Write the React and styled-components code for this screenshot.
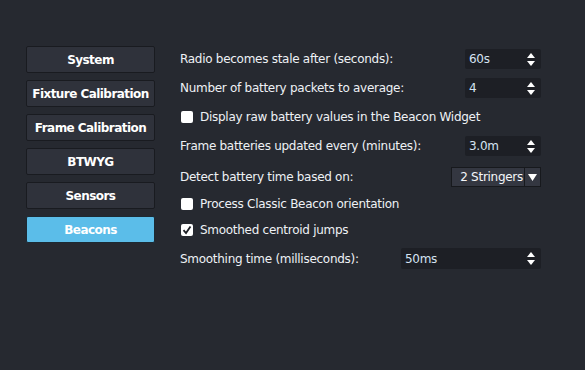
import styled, { createGlobalStyle } from 'styled-components';

const GlobalStyle = createGlobalStyle`
  html, body {
    margin: 0;
    padding: 0;
    background: #262930;
  }
  * {
    box-sizing: border-box;
  }
`;

const Page = styled.div`
  width: 585px;
  height: 370px;
  background: #262930;
  display: flex;
  flex-direction: row;
  padding-top: 46px;
  padding-left: 26px;
  font-family: 'DejaVu Sans', Verdana, sans-serif;
  color: #f2f4f8;
  letter-spacing: -0.28px;
`;

const Sidebar = styled.div`
  display: flex;
  flex-direction: column;
  gap: 7px;
  width: 129px;
`;

const NavButton = styled.div`
  height: 27px;
  border-radius: 2px;
  border: 1px solid ${(props) => (props.active ? '#1d2a33' : '#191b20')};
  background: ${(props) => (props.active ? '#5bbde9' : '#2f323b')};
  display: flex;
  justify-content: center;
  align-items: center;
  font-size: 12px;
  font-weight: bold;
  color: #ffffff;
  white-space: nowrap;
  letter-spacing: -0.55px;
`;

const Settings = styled.div`
  margin-left: 25px;
  margin-top: 3px;
  width: 361px;
  display: flex;
  flex-direction: column;
  gap: 9px;
`;

const Row = styled.div`
  display: flex;
  flex-direction: row;
  justify-content: space-between;
  align-items: center;
  height: ${(props) => props.h || 20}px;
  margin-top: ${(props) => props.mt || 0}px;
  font-size: 12px;
  white-space: nowrap;
`;

const Label = styled.span`
  color: #eef1f5;
`;

const SpinBox = styled.div`
  width: ${(props) => props.w}px;
  height: ${(props) => props.h || 20}px;
  background: #1d1f25;
  border-radius: 2px;
  display: flex;
  align-items: center;
  justify-content: space-between;
  padding-left: 4px;
  padding-right: 6px;
  color: #d6e3f2;
  font-size: 12px;
`;

const Combo = styled.div`
  width: 90px;
  height: 20px;
  display: flex;
  background: #343741;
  border: 1px solid #17191d;
  font-size: 12px;
  color: #f4f6f9;
`;

const ComboText = styled.div`
  flex: 1;
  display: flex;
  align-items: center;
  justify-content: flex-end;
  padding-right: 1px;
`;

const ComboArrow = styled.div`
  width: 16px;
  border-left: 1px solid #17191d;
  display: flex;
  align-items: center;
  justify-content: center;
`;

const CheckRow = styled.label`
  display: flex;
  align-items: center;
  gap: 7px;
  height: 18px;
  margin-top: ${(props) => props.mt || 0}px;
  font-size: 12px;
  color: #eef1f5;
  padding-left: 1px;
  white-space: nowrap;
`;

const Box = styled.span`
  width: 12px;
  height: 12px;
  border-radius: 2px;
  background: #ffffff;
  display: flex;
  align-items: center;
  justify-content: center;
`;

function Arrows() {
  return (
    <svg width="8" height="13" viewBox="0 0 8 13">
      <polygon points="4,0 8,5 0,5" fill="#ffffff" />
      <polygon points="0,8 8,8 4,13" fill="#ffffff" />
    </svg>
  );
}

function Spin({ value, w, h }) {
  return (
    <SpinBox w={w} h={h}>
      <span>{value}</span>
      <Arrows />
    </SpinBox>
  );
}

function Check({ checked, mt, children }) {
  return (
    <CheckRow mt={mt}>
      <Box>
        {checked && (
          <svg width="10" height="10" viewBox="0 0 10 10">
            <polyline
              points="1.5,5.2 4,8 8.5,1.5"
              fill="none"
              stroke="#1d1f25"
              strokeWidth="1.8"
            />
          </svg>
        )}
      </Box>
      {children}
    </CheckRow>
  );
}

const navItems = [
  'System',
  'Fixture Calibration',
  'Frame Calibration',
  'BTWYG',
  'Sensors',
  'Beacons',
];

export default function App() {
  return (
    <>
      <GlobalStyle />
      <Page>
        <Sidebar>
          {navItems.map((item) => (
            <NavButton key={item} active={item === 'Beacons'}>
              {item}
            </NavButton>
          ))}
        </Sidebar>
        <Settings>
          <Row>
            <Label>Radio becomes stale after (seconds):</Label>
            <Spin value="60s" w={76} />
          </Row>
          <Row>
            <Label>Number of battery packets to average:</Label>
            <Spin value="4" w={76} />
          </Row>
          <Check mt={1}>Display raw battery values in the Beacon Widget</Check>
          <Row mt={1}>
            <Label>Frame batteries updated every (minutes):</Label>
            <Spin value="3.0m" w={76} />
          </Row>
          <Row mt={2}>
            <Label>Detect battery time based on:</Label>
            <Combo>
              <ComboText>2 Stringers</ComboText>
              <ComboArrow>
                <svg width="9" height="7" viewBox="0 0 9 7">
                  <polygon points="0,0 9,0 4.5,7" fill="#ffffff" />
                </svg>
              </ComboArrow>
            </Combo>
          </Row>
          <Check mt={-1}>Process Classic Beacon orientation</Check>
          <Check checked mt={-1}>Smoothed centroid jumps</Check>
          <Row h={21}>
            <Label>Smoothing time (milliseconds):</Label>
            <Spin value="50ms" w={140} h={21} />
          </Row>
        </Settings>
      </Page>
    </>
  );
}
